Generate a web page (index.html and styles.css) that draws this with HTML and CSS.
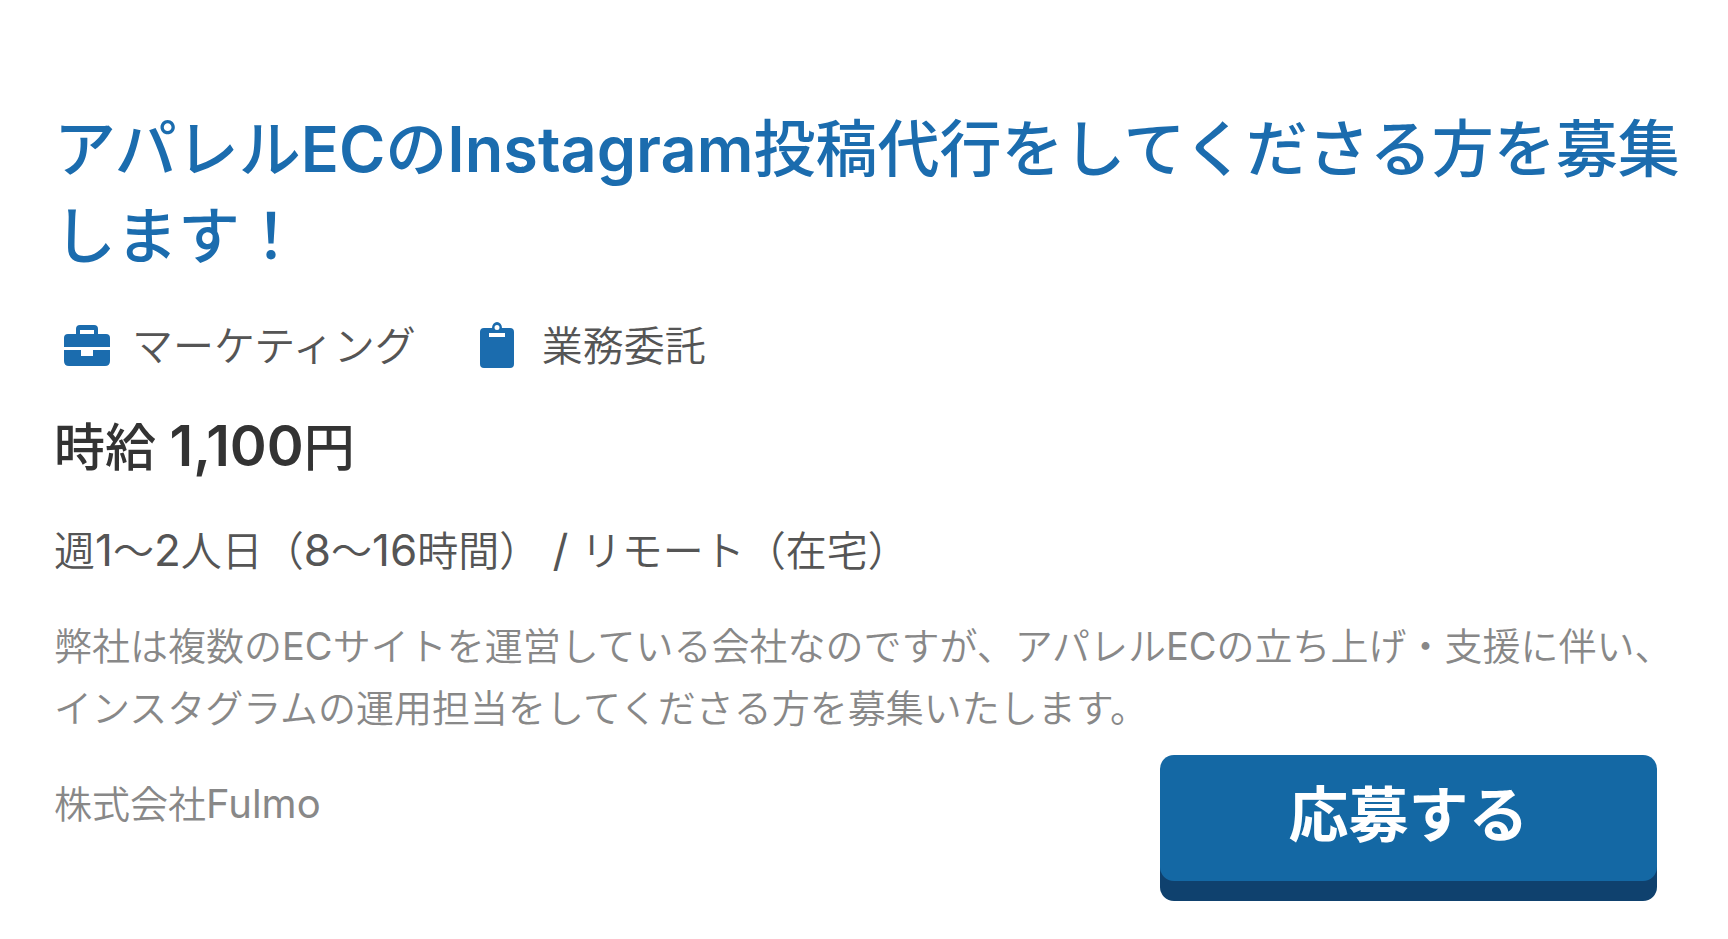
FILE: index.html
```html
<!DOCTYPE html>
<html lang="ja">
<head>
  <meta charset="UTF-8">
  <meta name="viewport" content="width=device-width, initial-scale=1.0">
  <title>アパレルECのInstagram投稿代行</title>
  <link rel="stylesheet" href="styles.css">
</head>
<body>
  <main class="job">
    <h1 class="job-title"><a href="#">アパレル<span class="latin">EC</span>の<span class="latin">Instagram</span>投稿代行をしてくださる方を募集します！</a></h1>

    <!-- Category and contract type -->
    <ul class="tags">
      <li class="tag">
        <svg class="tag-icon" viewBox="0 0 48 48" aria-hidden="true">
          <path fill-rule="evenodd" d="M13 12V7q0-4 4-4h14q4 0 4 4v5h8q4 0 4 4v9H1v-9q0-4 4-4zM17 12h14V8H17z"/>
          <path d="M1 28h17v6h12v-6h17v11q0 5-5 5H6q-5 0-5-5z"/>
        </svg>
        <span>マーケティング</span>
      </li>
      <li class="tag">
        <svg class="tag-icon" viewBox="0 0 48 48" aria-hidden="true">
          <path fill-rule="evenodd" d="M11 6h8a5 6 0 0 1 10 0h8q4 0 4 4v32q0 4-4 4H11q-4 0-4-4V10q0-4 4-4zM24 3a2 2 0 1 0 0 5 2 2 0 0 0 0-5zM16 11v4h16v-4z"/>
        </svg>
        <span>業務委託</span>
      </li>
    </ul>

    <p class="pay">時給 <span class="latin">1,100</span>円</p>
    <p class="terms">週<span class="latin">1</span>〜<span class="latin">2</span>人日（<span class="latin">8</span>〜<span class="latin">16</span>時間）<span class="latin"> / </span>リモート（在宅）</p>
    <p class="description">弊社は複数の<span class="latin">EC</span>サイトを運営している会社なのですが、アパレル<span class="latin">EC</span>の立ち上げ・支援に伴い、インスタグラムの運用担当をしてくださる方を募集いたします。</p>

    <div class="job-footer">
      <p class="company">株式会社<span class="latin">Fulmo</span></p>
      <button class="apply" type="button">応募する</button>
    </div>
  </main>
</body>
</html>
```

FILE: styles.css
```css
* {
  box-sizing: border-box;
}

body {
  margin: 0;
  background-color: #fff;
  font-family: Inter, "Noto Sans CJK JP", sans-serif;
}

h1, p, ul {
  margin: 0;
  padding: 0;
}

.job {
  padding: 106px 36px 32px 54px;
}

.job-title {
  font-size: 62px;
  font-weight: 500;
  line-height: 87px;
}

.job-title a {
  color: #1b6cae;
  text-decoration: none;
}

.job-title .latin {
  font-size: 63px;
  font-weight: 600;
}

.tags {
  display: flex;
  gap: 48px;
  margin-top: 34px;
  list-style: none;
}

.tag {
  display: flex;
  align-items: center;
  gap: 12px;
  color: #555;
  font-size: 41px;
  font-weight: 350;
  line-height: 64px;
}

.tag-icon {
  width: 66px;
  height: 48px;
  fill: #1b6cae;
}

.pay {
  margin-top: 30px;
  color: #333;
  font-size: 51px;
  font-weight: 500;
  line-height: 76px;
}

.pay .latin {
  font-size: 56px;
  font-weight: 600;
}

.terms {
  margin-top: 32px;
  color: #555;
  font-size: 41px;
  font-weight: 350;
  line-height: 64px;
}

.terms .latin {
  font-size: 44px;
  font-weight: 400;
}

.description {
  margin-top: 32px;
  color: #888;
  font-size: 38px;
  font-weight: 350;
  line-height: 62px;
}

.description .latin,
.company .latin {
  font-weight: 400;
}

.job-footer {
  display: flex;
  justify-content: space-between;
  align-items: flex-start;
  margin-top: 16px;
  padding-right: 35px;
}

.company {
  margin-top: 18px;
  color: #888;
  font-size: 38px;
  font-weight: 350;
  line-height: 62px;
}

.company .latin {
  font-size: 40px;
}

.apply {
  width: 497px;
  height: 126px;
  margin-bottom: 20px;
  padding: 0 0 16px;
  border: none;
  border-radius: 14px;
  background-color: #1468a4;
  box-shadow: 0 20px 0 #0f416e;
  color: #fff;
  font-family: inherit;
  font-size: 60px;
  font-weight: 700;
  cursor: pointer;
}
```
